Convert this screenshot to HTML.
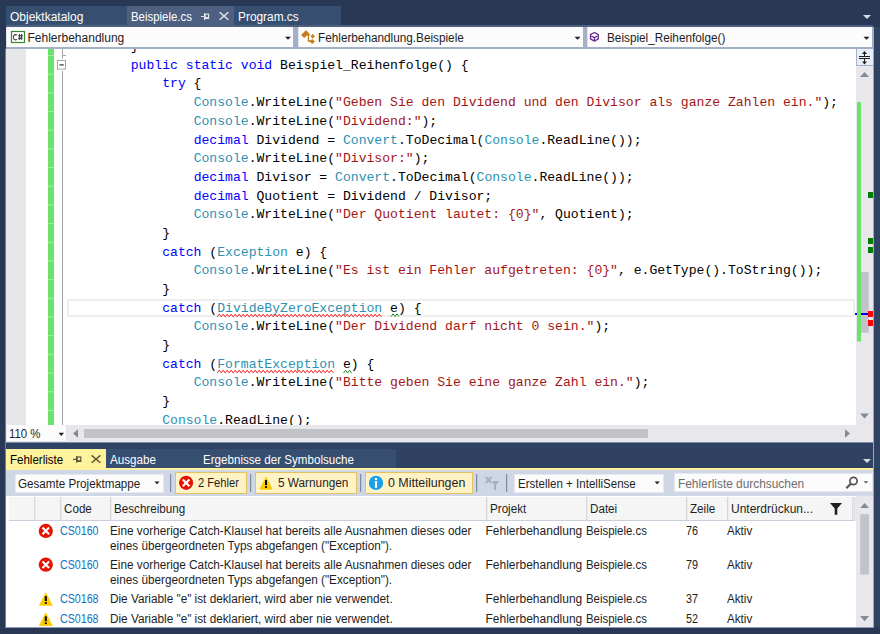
<!DOCTYPE html>
<html><head><meta charset="utf-8">
<style>
html,body{margin:0;padding:0}
body{width:880px;height:634px;overflow:hidden;position:relative;background:#293955;font-family:"Liberation Sans",sans-serif}
.a{position:absolute}
.s{position:absolute;font-family:"Liberation Sans",sans-serif;font-size:12px;line-height:15px;white-space:pre;transform-origin:0 0}
.w{color:#fff}
.code{position:absolute;left:61.9px;top:-10.9px;font-family:"Liberation Mono",monospace;font-size:13.1px;line-height:18.68px;white-space:pre;color:#000;margin:0}
.k{color:#0000ff}.t{color:#2b91af}.q{color:#a31515}
</style></head><body>

<!-- top document tabs -->
<div class="a" style="left:6px;top:6px;width:121px;height:19px;background:#364e6f"></div>
<div class="a" style="left:127px;top:6px;width:107px;height:19px;background:#4d6082"></div>
<div class="a" style="left:234px;top:6px;width:107px;height:19px;background:#364e6f"></div>
<div class="s w" style="left:10px;top:10px;transform:scaleX(1.0)">Objektkatalog</div>
<div class="s w" style="left:130.5px;top:10px;transform:scaleX(0.95)">Beispiele.cs</div>
<div class="s w" style="left:238px;top:10px;transform:scaleX(0.99)">Program.cs</div>
<div class="a" style="left:6px;top:25px;width:867px;height:2px;background:#4d6082"></div>

<!-- nav bar -->
<div class="a" style="left:873px;top:27px;width:7px;height:600px;background:#304262"></div>
<div class="a" style="left:6px;top:27px;width:868px;height:22px;background:#a4b0c6"></div>
<div class="a" style="left:6px;top:27px;width:287px;height:20px;background:#fcfcfc;box-shadow:inset 1px 0 0 #dfe3ea"></div>
<div class="a" style="left:297.5px;top:27px;width:285px;height:20px;background:#fcfcfc;box-shadow:inset 1px 0 0 #dfe3ea"></div>
<div class="a" style="left:586.5px;top:27px;width:285.5px;height:20px;background:#fcfcfc;box-shadow:inset 1px 0 0 #dfe3ea"></div>
<div class="a" style="left:872px;top:27px;width:2px;height:20px;background:#a4b0c6"></div>
<svg class="a" style="left:0;top:0" width="880" height="60">
 <rect x="11.5" y="31.5" width="13" height="11" fill="#fff" stroke="#388a34" stroke-width="1.2"/>
 <path d="M17 35.2 A2.3 2.6 0 1 0 17 39.3" fill="none" stroke="#333" stroke-width="1.1"/>
 <path d="M19.6 34 L19.2 40 M21.6 34 L21.2 40 M18.3 35.8 L23 35.8 M18.1 38.2 L22.8 38.2" stroke="#333" stroke-width="1"/>
 <path d="M285 36.8 L291 36.8 L288 39.8 Z" fill="#1e1e1e"/>
 <path d="M574.5 36.8 L580.5 36.8 L577.5 39.8 Z" fill="#1e1e1e"/>
 <path d="M863.5 36.8 L869.5 36.8 L866.5 39.8 Z" fill="#1e1e1e"/>
 <!-- class icon -->
 <path d="M305.9 34.6 L310 34.6 M308.4 34.6 L308.4 41 L311 41" fill="none" stroke="#c27d1a" stroke-width="1.3"/>
 <g fill="#c27d1a">
  <path d="M301.1 34.9 L305.9 30.3 L309.2 33.2 L304.2 38 Z"/>
  <path d="M310.5 36.2 L312.7 34 L314.9 36.2 L312.7 38.4 Z"/>
  <path d="M309.8 41.5 L312.2 39.1 L314.8 41.5 L312.2 43.9 Z"/>
 </g>
 <!-- method cube -->
 <g fill="none" stroke="#652d90" stroke-width="1.3" stroke-linejoin="round">
  <path d="M594.4 32.5 L598.3 34.6 L598.3 38.9 L594.4 41.1 L590.5 38.9 L590.5 34.6 Z"/>
  <path d="M591.2 36 L594.4 37.6 L597.6 36 M594.4 37.6 L594.4 41"/>
 </g>
 <!-- tab icons -->
 <g stroke="#e3e6ec" stroke-width="1.2" fill="none">
  <path d="M201 16.5 L204.5 16.5 M204.6 13.2 L204.6 20"/>
  <rect x="205" y="14.2" width="3.6" height="4.2"/>
  <path d="M205 17.6 L208.6 17.6"/>
  <path d="M219.6 12.3 L228.4 19.8 M228.4 12.3 L219.6 19.8" stroke-width="1.5"/>
 </g>
 <path d="M863 15 L871 15 L867 19 Z" fill="#d8dce4"/>
</svg>
<div class="s" style="left:27.5px;top:30.5px;color:#1e1e1e">Fehlerbehandlung</div>
<div class="s" style="left:318px;top:30.5px;color:#1e1e1e;transform:scaleX(0.98)">Fehlerbehandlung.Beispiele</div>
<div class="s" style="left:607px;top:30.5px;color:#1e1e1e;transform:scaleX(0.98)">Beispiel_Reihenfolge()</div>

<!-- editor -->
<div class="a" style="left:6px;top:49px;width:850px;height:376px;background:#fff;overflow:hidden">
  <div class="a" style="left:0;top:0;width:19.5px;height:376px;background:#e6e7e8"></div>
  <div class="a" style="left:61px;top:250px;width:784px;height:14px;border:2px solid #eeeeee"></div>
<pre class="code">        }
        <span class="k">public</span> <span class="k">static</span> <span class="k">void</span> Beispiel_Reihenfolge() {
            <span class="k">try</span> {
                <span class="t">Console</span>.WriteLine(<span class="q">"Geben Sie den Dividend und den Divisor als ganze Zahlen ein."</span>);
                <span class="t">Console</span>.WriteLine(<span class="q">"Dividend:"</span>);
                <span class="k">decimal</span> Dividend = <span class="t">Convert</span>.ToDecimal(<span class="t">Console</span>.ReadLine());
                <span class="t">Console</span>.WriteLine(<span class="q">"Divisor:"</span>);
                <span class="k">decimal</span> Divisor = <span class="t">Convert</span>.ToDecimal(<span class="t">Console</span>.ReadLine());
                <span class="k">decimal</span> Quotient = Dividend / Divisor;
                <span class="t">Console</span>.WriteLine(<span class="q">"Der Quotient lautet: {0}"</span>, Quotient);
            }
            <span class="k">catch</span> (<span class="t">Exception</span> e) {
                <span class="t">Console</span>.WriteLine(<span class="q">"Es ist ein Fehler aufgetreten: {0}"</span>, e.GetType().ToString());
            }
            <span class="k">catch</span> (<span class="t">DivideByZeroException</span> e) {
                <span class="t">Console</span>.WriteLine(<span class="q">"Der Dividend darf nicht 0 sein."</span>);
            }
            <span class="k">catch</span> (<span class="t">FormatException</span> e) {
                <span class="t">Console</span>.WriteLine(<span class="q">"Bitte geben Sie eine ganze Zahl ein."</span>);
            }
            <span class="t">Console</span>.ReadLine();</pre>
</div>
<svg class="a" style="left:0;top:49px" width="880" height="376" viewBox="0 49 880 376">
 <rect x="48" y="49" width="6" height="376" fill="#6ce26c"/>
 <rect x="48" y="55.00" width="6" height="1" fill="#9ded9d"/><rect x="48" y="73.68" width="6" height="1" fill="#9ded9d"/><rect x="48" y="92.36" width="6" height="1" fill="#9ded9d"/><rect x="48" y="111.04" width="6" height="1" fill="#9ded9d"/><rect x="48" y="129.72" width="6" height="1" fill="#9ded9d"/><rect x="48" y="148.40" width="6" height="1" fill="#9ded9d"/><rect x="48" y="167.08" width="6" height="1" fill="#9ded9d"/><rect x="48" y="185.76" width="6" height="1" fill="#9ded9d"/><rect x="48" y="204.44" width="6" height="1" fill="#9ded9d"/><rect x="48" y="223.12" width="6" height="1" fill="#9ded9d"/><rect x="48" y="241.80" width="6" height="1" fill="#9ded9d"/><rect x="48" y="260.48" width="6" height="1" fill="#9ded9d"/><rect x="48" y="279.16" width="6" height="1" fill="#9ded9d"/><rect x="48" y="297.84" width="6" height="1" fill="#9ded9d"/><rect x="48" y="316.52" width="6" height="1" fill="#9ded9d"/><rect x="48" y="335.20" width="6" height="1" fill="#9ded9d"/><rect x="48" y="353.88" width="6" height="1" fill="#9ded9d"/><rect x="48" y="372.56" width="6" height="1" fill="#9ded9d"/><rect x="48" y="391.24" width="6" height="1" fill="#9ded9d"/><rect x="48" y="409.92" width="6" height="1" fill="#9ded9d"/>
 <rect x="62" y="49" width="1" height="9.6" fill="#a5a5a5"/>
 <rect x="62" y="55" width="4" height="1" fill="#a5a5a5"/>
 <rect x="57.5" y="60.5" width="8" height="8.6" fill="#fff" stroke="#a5a5a5" stroke-width="1"/>
 <rect x="59.5" y="64.3" width="4.2" height="1.2" fill="#333"/>
 <rect x="62" y="71" width="1" height="354" fill="#a5a5a5"/>
 <path d="M217.2 316.8 L219.2 314.2 L221.2 316.8 L223.2 314.2 L225.2 316.8 L227.2 314.2 L229.2 316.8 L231.2 314.2 L233.2 316.8 L235.2 314.2 L237.2 316.8 L239.2 314.2 L241.2 316.8 L243.2 314.2 L245.2 316.8 L247.2 314.2 L249.2 316.8 L251.2 314.2 L253.2 316.8 L255.2 314.2 L257.2 316.8 L259.2 314.2 L261.2 316.8 L263.2 314.2 L265.2 316.8 L267.2 314.2 L269.2 316.8 L271.2 314.2 L273.2 316.8 L275.2 314.2 L277.2 316.8 L279.2 314.2 L281.2 316.8 L283.2 314.2 L285.2 316.8 L287.2 314.2 L289.2 316.8 L291.2 314.2 L293.2 316.8 L295.2 314.2 L297.2 316.8 L299.2 314.2 L301.2 316.8 L303.2 314.2 L305.2 316.8 L307.2 314.2 L309.2 316.8 L311.2 314.2 L313.2 316.8 L315.2 314.2 L317.2 316.8 L319.2 314.2 L321.2 316.8 L323.2 314.2 L325.2 316.8 L327.2 314.2 L329.2 316.8 L331.2 314.2 L333.2 316.8 L335.2 314.2 L337.2 316.8 L339.2 314.2 L341.2 316.8 L343.2 314.2 L345.2 316.8 L347.2 314.2 L349.2 316.8 L351.2 314.2 L353.2 316.8 L355.2 314.2 L357.2 316.8 L359.2 314.2 L361.2 316.8 L363.2 314.2 L365.2 316.8 L367.2 314.2 L369.2 316.8 L371.2 314.2 L373.2 316.8 L375.2 314.2 L377.2 316.8 L379.2 314.2 L381.2 316.8" fill="none" stroke="#ff1a1a" stroke-width="1"/>
 <path d="M217.2 372.8 L219.2 370.2 L221.2 372.8 L223.2 370.2 L225.2 372.8 L227.2 370.2 L229.2 372.8 L231.2 370.2 L233.2 372.8 L235.2 370.2 L237.2 372.8 L239.2 370.2 L241.2 372.8 L243.2 370.2 L245.2 372.8 L247.2 370.2 L249.2 372.8 L251.2 370.2 L253.2 372.8 L255.2 370.2 L257.2 372.8 L259.2 370.2 L261.2 372.8 L263.2 370.2 L265.2 372.8 L267.2 370.2 L269.2 372.8 L271.2 370.2 L273.2 372.8 L275.2 370.2 L277.2 372.8 L279.2 370.2 L281.2 372.8 L283.2 370.2 L285.2 372.8 L287.2 370.2 L289.2 372.8 L291.2 370.2 L293.2 372.8 L295.2 370.2 L297.2 372.8 L299.2 370.2 L301.2 372.8 L303.2 370.2 L305.2 372.8 L307.2 370.2 L309.2 372.8 L311.2 370.2 L313.2 372.8 L315.2 370.2 L317.2 372.8 L319.2 370.2 L321.2 372.8 L323.2 370.2 L325.2 372.8 L327.2 370.2 L329.2 372.8 L331.2 370.2 L333.2 372.8" fill="none" stroke="#ff1a1a" stroke-width="1"/>
 <path d="M391.0 316.5 L393.0 313.9 L395.0 316.5 L397.0 313.9 L399.0 316.5" fill="none" stroke="#1a8a1a" stroke-width="1"/>
 <path d="M343.5 372.9 L345.5 370.3 L347.5 372.9 L349.5 370.3 L351.5 372.9" fill="none" stroke="#1a8a1a" stroke-width="1"/>
</svg>


<!-- h scrollbar -->
<div class="a" style="left:6px;top:425px;width:867px;height:17px;background:#e8e8ec"></div>
<div class="a" style="left:7px;top:425px;width:59.5px;height:16.5px;background:#fcfcfc;box-shadow:inset 0 -1px 0 #dfe3ea, inset -1px 0 0 #dfe3ea"></div>
<div class="s" style="left:9px;top:427px;color:#1e1e1e;transform:scaleX(0.95)">110 %</div>
<div class="a" style="left:84px;top:428.6px;width:564px;height:9.3px;background:#c2c3c9"></div>

<!-- editor vertical scrollbar -->
<div class="a" style="left:856px;top:49px;width:17px;height:376px;background:#e8e8ec"></div>
<svg class="a" style="left:0;top:0" width="880" height="450">
 <rect x="856.5" y="49" width="16.5" height="16.2" fill="#e8eefa"/>
 <rect x="856" y="49" width="1" height="17" fill="#a4b0c6"/>
 <rect x="856" y="65" width="17" height="1" fill="#a4b0c6"/>
 <rect x="859" y="56" width="11" height="1" fill="#1e1e1e"/>
 <rect x="859" y="58" width="11" height="1" fill="#1e1e1e"/>
 <rect x="864" y="52" width="1" height="4" fill="#1e1e1e"/>
 <rect x="864" y="59" width="1" height="4" fill="#1e1e1e"/>
 <path d="M862 54 L864.5 51 L867 54 Z M862 61.5 L864.5 64.5 L867 61.5 Z" fill="#1e1e1e"/>
 <path d="M860 77 L864.5 72 L869 77 Z" fill="#868999"/>
 <path d="M860 413.5 L869 413.5 L864.5 418.5 Z" fill="#868999"/>
 <rect x="861" y="272" width="7.8" height="60.7" fill="#c2c3c9"/>
 <rect x="855" y="313" width="13" height="2" fill="#0000e0"/>
 <rect x="857" y="102" width="4" height="239.5" fill="#6ce26c"/>
 <rect x="868" y="192" width="5" height="6" fill="#008000"/>
 <rect x="868" y="238" width="5" height="6" fill="#008000"/>
 <rect x="868" y="247" width="5" height="6" fill="#008000"/>
 <rect x="868" y="311" width="5" height="6" fill="#ff0000"/>
 <rect x="868" y="320" width="5" height="6" fill="#ff0000"/>
 <!-- h scrollbar arrows -->
 <path d="M78 429.3 L73 433.5 L78 437.7 Z" fill="#868999"/>
 <path d="M845 429.3 L850 433.5 L845 437.7 Z" fill="#868999"/>
 <path d="M58.7 432.7 L64 432.7 L61.35 435.9 Z" fill="#1e1e1e"/>
</svg>
<!-- panel tabs -->
<div class="a" style="left:6px;top:442px;width:867px;height:1px;background:#7a89a6"></div>
<div class="a" style="left:6px;top:443px;width:867px;height:25px;background:#304262"></div>
<div class="a" style="left:6px;top:448.8px;width:100px;height:19px;background:#fff29d"></div>
<div class="a" style="left:106px;top:448.8px;width:290px;height:19px;background:#364e6f"></div>
<div class="a" style="left:6px;top:467.8px;width:867px;height:2.2px;background:#fff29d"></div>
<div class="s" style="left:10px;top:453px;color:#000;transform:scaleX(0.96)">Fehlerliste</div>
<div class="s w" style="left:110px;top:453px;transform:scaleX(0.97)">Ausgabe</div>
<div class="s w" style="left:203px;top:453px;transform:scaleX(0.967)">Ergebnisse der Symbolsuche</div>

<!-- toolbar -->
<div class="a" style="left:6px;top:470px;width:867px;height:25.6px;background:#cfd6e5"></div>
<div class="a" style="left:14.5px;top:473.5px;width:149px;height:19px;background:#fcfcfc;box-shadow:inset 0 0 0 1px #e6e9ef"></div>
<div class="a" style="left:175px;top:472px;width:72px;height:21.7px;box-sizing:border-box;background:#fff3c6;border:1px solid #e5c365"></div>
<div class="a" style="left:255px;top:472px;width:102px;height:21.7px;box-sizing:border-box;background:#fff3c6;border:1px solid #e5c365"></div>
<div class="a" style="left:365px;top:472px;width:108px;height:21.7px;box-sizing:border-box;background:#fff3c6;border:1px solid #e5c365"></div>
<div class="a" style="left:514px;top:473.5px;width:149.6px;height:19px;background:#fcfcfc;box-shadow:inset 0 0 0 1px #e6e9ef"></div>
<div class="a" style="left:673.5px;top:473px;width:199px;height:19px;background:#fcfcfc;box-shadow:inset 0 0 0 1px #e6e9ef"></div>
<svg class="a" style="left:0;top:440px" width="880" height="194" viewBox="0 440 880 194">
 <g fill="none" stroke="#5f5538" stroke-width="1.2">
  <path d="M73 459.4 L76.5 459.4 M76.7 456 L76.7 462.8"/>
  <rect x="77.2" y="457" width="3.6" height="4.4"/>
  <path d="M77.2 460.8 L80.8 460.8"/>
  <path d="M91.6 455.4 L100.4 462.8 M100.4 455.4 L91.6 462.8" stroke-width="1.5"/>
 </g>
 <path d="M863 459 L871 459 L867 463 Z" fill="#d8dce4"/>
 <path d="M154.5 481.6 L159.5 481.6 L157 484.2 Z" fill="#1e1e1e"/>
 <path d="M654.5 481.6 L659.8 481.6 L657.15 484.2 Z" fill="#1e1e1e"/>
 <path d="M863.6 481.3 L868.2 481.3 L865.9 483.6 Z" fill="#555"/>
 <g fill="#7d8aa0">
  <rect x="170" y="474" width="1.2" height="18"/>
  <rect x="250" y="474" width="1.2" height="18"/>
  <rect x="360" y="474" width="1.2" height="18"/>
  <rect x="476" y="474" width="1.2" height="18"/>
  <rect x="506" y="474" width="1.2" height="18"/>
 </g>
 <circle cx="186.1" cy="482.85" r="7.6" fill="#fff"/><circle cx="186.1" cy="482.85" r="7.1" fill="#e51400"/><path d="M182.79999999999998 479.55 L189.4 486.15000000000003 M189.4 479.55 L182.79999999999998 486.15000000000003" stroke="#fff" stroke-width="2.1"/>
 <path d="M266 475.2 L273.8 490.3 L258.2 490.3 Z" fill="#fff"/><path d="M266 476 L273 489.7 L259 489.7 Z" fill="#ffcc00"/><rect x="265" y="480.1" width="2" height="5" fill="#000"/><rect x="265" y="486.2" width="2" height="1.7" fill="#000"/>
 <circle cx="376" cy="482.9" r="7.6" fill="#fff"/><circle cx="376" cy="482.9" r="7.2" fill="#1ba1e2"/><rect x="374.9" y="478.0" width="2.2" height="1.9" fill="#fff"/><rect x="374.9" y="481.0" width="2.2" height="6.8" fill="#fff"/>
 <path d="M485.8 477 L491.5 483 M491.5 477 L485.8 483" stroke="#a9afbc" stroke-width="2"/>
 <path d="M492.2 481 L499 481 L496 485 L496 490 L494 490 L494 485 Z" fill="#a9afbc"/>
 <circle cx="853.5" cy="481" r="3.6" fill="none" stroke="#555" stroke-width="1.7"/>
 <path d="M851 483.5 L846.3 488.2" stroke="#555" stroke-width="2.2"/>
</svg>
<div class="s" style="left:18px;top:477px;color:#1e1e1e;transform:scaleX(0.97)">Gesamte Projektmappe</div>
<div class="s" style="left:197.5px;top:476px;color:#1e1e1e;transform:scaleX(0.93)">2 Fehler</div>
<div class="s" style="left:278px;top:476px;color:#1e1e1e;transform:scaleX(0.983)">5 Warnungen</div>
<div class="s" style="left:387.5px;top:476px;color:#1e1e1e;transform:scaleX(1.035)">0 Mitteilungen</div>
<div class="s" style="left:517.5px;top:477px;color:#1e1e1e;transform:scaleX(0.962)">Erstellen + IntelliSense</div>
<div class="s" style="left:677.5px;top:476.5px;color:#6d6d6d;transform:scaleX(0.99)">Fehlerliste durchsuchen</div>

<!-- list -->
<div class="a" style="left:6px;top:495.6px;width:850px;height:131.4px;background:#fff"></div>
<div class="a" style="left:9px;top:497px;width:846px;height:23.2px;background:#f5f5f5;border-bottom:1px solid #cccedb"></div>
<svg class="a" style="left:0;top:490px" width="880" height="144" viewBox="0 490 880 144">
 <g fill="#cccedb">
  <rect x="34.3" y="497" width="1" height="23.5"/>
  <rect x="60.3" y="497" width="1" height="23.5"/>
  <rect x="110.3" y="497" width="1" height="23.5"/>
  <rect x="486.3" y="497" width="1" height="23.5"/>
  <rect x="586.3" y="497" width="1" height="23.5"/>
  <rect x="686.3" y="497" width="1" height="23.5"/>
  <rect x="727.2" y="497" width="1" height="23.5"/>
  <rect x="852.4" y="497" width="1" height="23.5"/>
  <rect x="854.4" y="497" width="1" height="23.5"/>
 </g>
 <path d="M830 503 L842 503 L837.3 508.5 L837.3 514.8 L834.7 514.8 L834.7 508.5 Z" fill="#1e1e1e"/>
 <rect x="856" y="495.6" width="17" height="131.4" fill="#e8e8ec"/>
 <path d="M860.2 508 L864.6 503 L869 508 Z" fill="#868999"/>
 <path d="M860.2 616 L869 616 L864.6 621.2 Z" fill="#868999"/>
 <rect x="860.2" y="514.3" width="8.8" height="60.2" fill="#c2c3c9"/>
 <circle cx="45.8" cy="530.9" r="7.6" fill="#fff"/><circle cx="45.8" cy="530.9" r="7.1" fill="#e51400"/><path d="M42.5 527.6 L49.099999999999994 534.1999999999999 M49.099999999999994 527.6 L42.5 534.1999999999999" stroke="#fff" stroke-width="2.1"/>
 <circle cx="45.8" cy="564.7" r="7.6" fill="#fff"/><circle cx="45.8" cy="564.7" r="7.1" fill="#e51400"/><path d="M42.5 561.4000000000001 L49.099999999999994 568.0 M49.099999999999994 561.4000000000001 L42.5 568.0" stroke="#fff" stroke-width="2.1"/>
 <path d="M45.8 591.2 L53.599999999999994 606.3 L38.0 606.3 Z" fill="#fff"/><path d="M45.8 592 L52.8 605.7 L38.8 605.7 Z" fill="#ffcc00"/><rect x="44.8" y="596.1" width="2" height="5" fill="#000"/><rect x="44.8" y="602.2" width="2" height="1.7" fill="#000"/>
 <path d="M45.8 611.4000000000001 L53.599999999999994 626.5 L38.0 626.5 Z" fill="#fff"/><path d="M45.8 612.2 L52.8 625.9000000000001 L38.8 625.9000000000001 Z" fill="#ffcc00"/><rect x="44.8" y="616.3000000000001" width="2" height="5" fill="#000"/><rect x="44.8" y="622.4000000000001" width="2" height="1.7" fill="#000"/>
</svg>
<div class="s" style="left:63.5px;top:502px;color:#1e1e1e;transform:scaleX(0.97)">Code</div>
<div class="s" style="left:113.5px;top:502px;color:#1e1e1e;transform:scaleX(0.97)">Beschreibung</div>
<div class="s" style="left:489.5px;top:502px;color:#1e1e1e;transform:scaleX(0.97)">Projekt</div>
<div class="s" style="left:589.5px;top:502px;color:#1e1e1e;transform:scaleX(0.97)">Datei</div>
<div class="s" style="left:689.5px;top:502px;color:#1e1e1e;transform:scaleX(0.97)">Zeile</div>
<div class="s" style="left:731px;top:502px;color:#1e1e1e">Unterdrückun...</div>

<div class="s" style="left:59.5px;top:524px;color:#0e70c0;transform:scaleX(0.887)">CS0160</div>
<div class="s" style="left:109.5px;top:524px;color:#1e1e1e;transform:scaleX(0.98)">Eine vorherige Catch-Klausel hat bereits alle Ausnahmen dieses oder
eines übergeordneten Typs abgefangen ("Exception").</div>
<div class="s" style="left:485.5px;top:524px;color:#1e1e1e">Fehlerbehandlung</div>
<div class="s" style="left:585.5px;top:524px;color:#1e1e1e;transform:scaleX(0.95)">Beispiele.cs</div>
<div class="s" style="left:685.5px;top:524px;color:#1e1e1e;transform:scaleX(0.9)">76</div>
<div class="s" style="left:727px;top:524px;color:#1e1e1e;transform:scaleX(0.97)">Aktiv</div>

<div class="s" style="left:59.5px;top:558px;color:#0e70c0;transform:scaleX(0.887)">CS0160</div>
<div class="s" style="left:109.5px;top:558px;color:#1e1e1e;transform:scaleX(0.98)">Eine vorherige Catch-Klausel hat bereits alle Ausnahmen dieses oder
eines übergeordneten Typs abgefangen ("Exception").</div>
<div class="s" style="left:485.5px;top:558px;color:#1e1e1e">Fehlerbehandlung</div>
<div class="s" style="left:585.5px;top:558px;color:#1e1e1e;transform:scaleX(0.95)">Beispiele.cs</div>
<div class="s" style="left:685.5px;top:558px;color:#1e1e1e;transform:scaleX(0.9)">79</div>
<div class="s" style="left:727px;top:558px;color:#1e1e1e;transform:scaleX(0.97)">Aktiv</div>

<div class="s" style="left:59.5px;top:592px;color:#0e70c0;transform:scaleX(0.887)">CS0168</div>
<div class="s" style="left:109.5px;top:592px;color:#1e1e1e;transform:scaleX(0.98)">Die Variable "e" ist deklariert, wird aber nie verwendet.</div>
<div class="s" style="left:485.5px;top:592px;color:#1e1e1e">Fehlerbehandlung</div>
<div class="s" style="left:585.5px;top:592px;color:#1e1e1e;transform:scaleX(0.95)">Beispiele.cs</div>
<div class="s" style="left:685.5px;top:592px;color:#1e1e1e;transform:scaleX(0.9)">37</div>
<div class="s" style="left:727px;top:592px;color:#1e1e1e;transform:scaleX(0.97)">Aktiv</div>

<div class="s" style="left:59.5px;top:611.5px;color:#0e70c0;transform:scaleX(0.887)">CS0168</div>
<div class="s" style="left:109.5px;top:611.5px;color:#1e1e1e;transform:scaleX(0.98)">Die Variable "e" ist deklariert, wird aber nie verwendet.</div>
<div class="s" style="left:485.5px;top:611.5px;color:#1e1e1e">Fehlerbehandlung</div>
<div class="s" style="left:585.5px;top:611.5px;color:#1e1e1e;transform:scaleX(0.95)">Beispiele.cs</div>
<div class="s" style="left:685.5px;top:611.5px;color:#1e1e1e;transform:scaleX(0.9)">52</div>
<div class="s" style="left:727px;top:611.5px;color:#1e1e1e;transform:scaleX(0.97)">Aktiv</div>
<div class="a" style="left:0;top:627px;width:880px;height:7px;background:#293955"></div>

<!-- frame edges -->
<div class="a" style="left:873px;top:27px;width:1px;height:601px;background:#9aa7c0"></div>
<div class="a" style="left:5px;top:49px;width:1px;height:579px;background:#6f7f9e"></div>
<div class="a" style="left:5px;top:627px;width:869px;height:1px;background:#8c9ab5"></div>
</body></html>
